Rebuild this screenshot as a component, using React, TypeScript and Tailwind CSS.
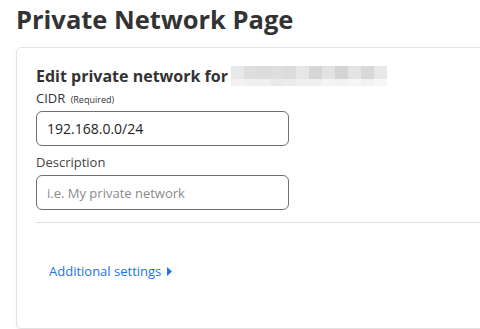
import React from 'react';

// pixelated placeholder for the redacted network name
const blurTop = ['#e8e8e8', '#dedede', '#dcdcdc', '#dedede', '#dcdcdc', '#e6e6e6', '#d6d6d6', '#e2e2e2', '#d4d4d4', '#e4e4e4', '#d8d8d8', '#e8e8e8'];
const blurBottom = ['#f2f2f2', '#f0f0f0', '#f0f0f0', '#eaeaea', '#ececec', '#f0f0f0', '#efefef', '#f5f5f5', '#f2f2f2', '#f6f6f6', '#f2f2f2', '#f7f7f7'];

const Redacted: React.FC = () => (
  <span className="inline-flex flex-col align-middle ml-[3px]">
    <span className="flex">
      {blurTop.map((c, i) => (
        <span key={i} className="w-[13px] h-[13px]" style={{ backgroundColor: c }} />
      ))}
    </span>
    <span className="flex">
      {blurBottom.map((c, i) => (
        <span key={i} className="w-[13px] h-[7px]" style={{ backgroundColor: c }} />
      ))}
    </span>
  </span>
);

const App: React.FC = () => {
  return (
    <div className="w-[480px] h-[329px] overflow-hidden bg-white font-['Open_Sans','Noto_Sans',sans-serif] text-[#333]">
      <h1 className="pl-[16px] pt-[2px] text-[25.5px] leading-[35px] font-bold text-[#333]">
        Private Network Page
      </h1>
      <div className="ml-[16px] mt-[10px] w-[500px] h-[282px] border border-[#e2e2e2] rounded-[5px] shadow-[0_1px_2px_rgba(0,0,0,0.08)] pl-[19px] pt-[16px]">
        <h2 className="flex items-center text-[16px] leading-[24px] font-bold text-[#333]">
          Edit private network for
          <Redacted />
        </h2>
        <label className="block text-[13px] leading-[20px] text-[#333]">
          CIDR <span className="text-[9px] ml-[2px]">(Required)</span>
        </label>
        <input
          readOnly
          value="192.168.0.0/24"
          className="block mt-[1px] w-[253px] h-[35px] border border-[#707070] rounded-[6px] px-[10px] text-[14px] text-[#222] outline-none"
        />
        <label className="block mt-[6px] text-[13px] leading-[20px] text-[#444]">Description</label>
        <input
          readOnly
          placeholder="i.e. My private network"
          className="block mt-[3px] w-[253px] h-[35px] border border-[#707070] rounded-[6px] px-[10px] text-[13px] text-[#222] placeholder:text-[#8a8a8a] outline-none"
        />
        <div className="mt-[12px] h-px bg-[#e0e0e0]" />
        <button className="flex items-center gap-[6px] ml-[13px] mt-[38px] text-[13px] leading-[20px] text-[#1a73e8]">
          Additional settings
          <svg width="5" height="9" viewBox="0 0 5 9">
            <path d="M0 0 L5 4.5 L0 9 Z" fill="#1a73e8" />
          </svg>
        </button>
      </div>
    </div>
  );
};

export default App;
